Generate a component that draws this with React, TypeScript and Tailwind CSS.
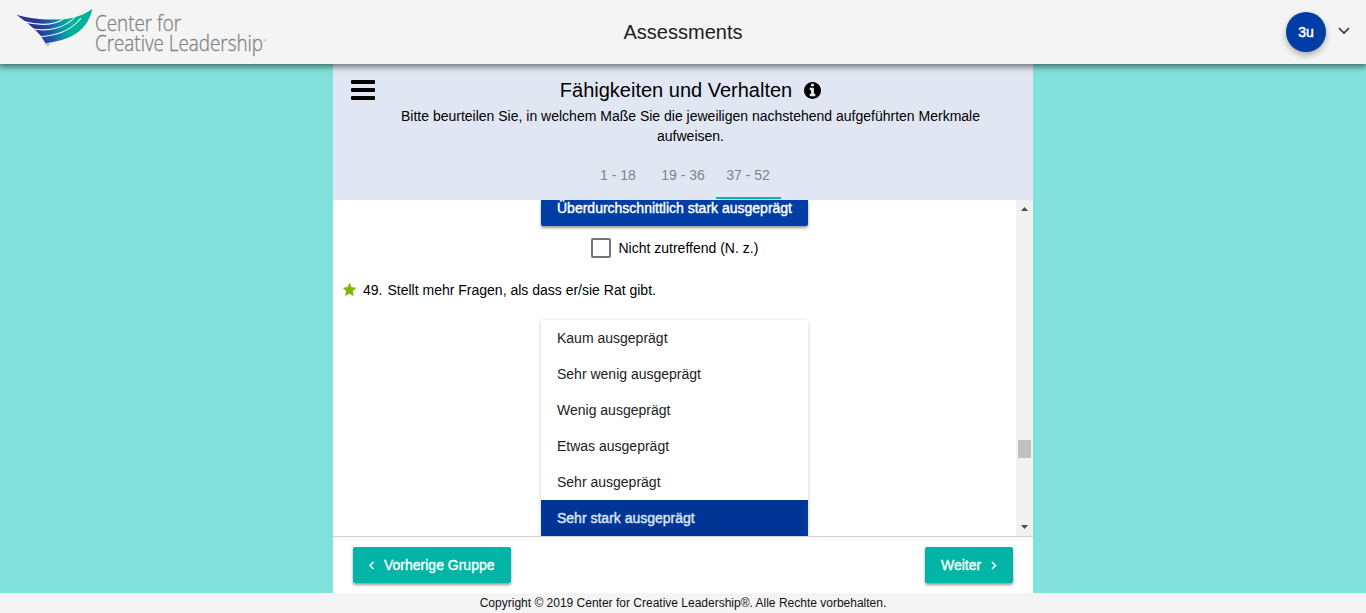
import React from "react";

const options = [
  "Kaum ausgeprägt",
  "Sehr wenig ausgeprägt",
  "Wenig ausgeprägt",
  "Etwas ausgeprägt",
  "Sehr ausgeprägt",
];

function Logo() {
  return (
    <svg width="290" height="64" viewBox="0 0 290 64" className="block">
      <defs>
        <linearGradient id="wing" gradientUnits="userSpaceOnUse" x1="36" y1="26" x2="70" y2="19">
          <stop offset="0" stopColor="#2b3490" />
          <stop offset="0.35" stopColor="#1d55a4" />
          <stop offset="0.7" stopColor="#0a93a8" />
          <stop offset="1" stopColor="#00b398" />
        </linearGradient>
      </defs>
      <path
        d="M16.500 14.800 C28 18.500 44 20.300 62 19.300 C74 18.500 84 15 92.300 8.700 C90 21 83 30 72 36 C63 40.500 54 42 45.500 43.300 C42.500 38 39 33 33.500 28.500 C28 23.500 22 19 16.500 14.800 Z"
        fill="url(#wing)"
      />
      <g fill="none" stroke="#f4f4f4" strokeWidth="1.100">
        <path d="M24 21.600 C40 26 54 25 64 18.700" />
        <path d="M32 28.800 C48 32 65 28 75 17" />
        <path d="M38.500 36.500 C56 36.500 72 30 81 18" />
      </g>
      <text x="45" y="45.800" fontSize="3" fill="#777" fontFamily="Liberation Sans, sans-serif">TM</text>
      <g
        fill="#7b8385"
        stroke="#7b8385"
        strokeWidth="0.300"
        fontFamily="Open Sans, sans-serif"
        fontWeight="300"
        fontSize="21.500"
      >
        <text x="95" y="31.200" textLength="86" lengthAdjust="spacingAndGlyphs">Center for</text>
        <text x="95" y="50.600" textLength="168" lengthAdjust="spacingAndGlyphs">Creative Leadership</text>
      </g>
      <text x="263.300" y="42" fontSize="4" fill="#7b8385" fontFamily="Liberation Sans, sans-serif">®</text>
    </svg>
  );
}

export default function App() {
  return (
    <div className="flex h-[613px] w-[1366px] flex-col overflow-hidden bg-[#82e2db] font-['Liberation_Sans',Arial,sans-serif] text-sm text-black">
      <header className="relative z-10 grid h-16 shrink-0 grid-cols-[1fr_auto_1fr] items-center bg-[#f4f4f4] shadow-[0_2px_6px_1px_rgba(0,0,0,0.5)]">
        <Logo />
        <h1 className="text-xl leading-6 font-normal text-[#212121]">Assessments</h1>
        <div className="flex items-center justify-end gap-3 pr-4">
          <div className="flex size-10 items-center justify-center rounded-full bg-[#003da5] text-sm text-white shadow-[0_3px_6px_rgba(0,0,0,0.3)] [-webkit-text-stroke:0.500px_white]">
            3u
          </div>
          <svg width="12" height="8" viewBox="0 0 12 8" fill="none" stroke="#333" strokeWidth="1.600" className="-mt-0.5">
            <path d="M1 1 L6 6 L11 1" />
          </svg>
        </div>
      </header>

      <main className="mx-auto flex w-[700px] flex-1 flex-col overflow-hidden bg-white">
        <section className="flex h-[136px] shrink-0 bg-[#e0e7f3]">
          <button className="mt-4 ml-[18px] flex h-5 w-6 shrink-0 flex-col justify-between">
            <span className="h-1 w-6 rounded-[1px] bg-black" />
            <span className="h-1 w-6 rounded-[1px] bg-black" />
            <span className="h-1 w-6 rounded-[1px] bg-black" />
          </button>
          <div className="ml-[15px] flex w-[600px] flex-col items-center pt-[14px]">
            <div className="flex items-center gap-3 pl-px">
              <h2 className="text-xl leading-6 font-normal">Fähigkeiten und Verhalten</h2>
              <svg width="17" height="17" viewBox="0 128 1536 1536">
                <path d="M1024 1376v-160q0-14-9-23t-23-9h-96v-512q0-14-9-23t-23-9h-320q-14 0-23 9t-9 23v160q0 14 9 23t23 9h96v320h-96q-14 0-23 9t-9 23v160q0 14 9 23t23 9h448q14 0 23-9t9-23zm-128-896v-160q0-14-9-23t-23-9h-192q-14 0-23 9t-9 23v160q0 14 9 23t23 9h192q14 0 23-9t9-23zm640 416q0 209-103 385.500t-279.500 279.500-385.500 103-385.500-103-279.500-279.500-103-385.500 103-385.500 279.500-279.500 385.500-103 385.500 103 279.500 279.500 103 385.500z" />
              </svg>
            </div>
            <p className="mt-1 w-[600px] pl-px text-center leading-5">
              Bitte beurteilen Sie, in welchem Maße Sie die jeweiligen nachstehend aufgeführten Merkmale
              <br />
              aufweisen.
            </p>
            <nav className="mt-1 mr-[14px] flex h-[49px] text-[#7d838c]">
              <a className="flex w-[65px] items-center justify-center">1 - 18</a>
              <a className="flex w-[65px] items-center justify-center">19 - 36</a>
              <a className="flex w-[65px] items-center justify-center border-b-2 border-[#00b5a5] pt-0.5">37 - 52</a>
            </nav>
          </div>
        </section>

        <section className="flex h-[336px] shrink-0">
          <div className="flex flex-1 flex-col overflow-hidden">
            <div className="ml-[208px] flex h-[26px] w-[267px] shrink-0 rounded-b-[2px] bg-[#003da5] pl-4 leading-[16px] text-white shadow-[0_2px_3px_rgba(0,0,0,0.4)] [-webkit-text-stroke:0.400px_white]">
              Überdurchschnittlich stark ausgeprägt
            </div>
            <label className="mt-3 ml-[258px] flex h-5 shrink-0 items-center gap-[7.500px]">
              <span className="size-5 rounded-[2px] border-2 border-[#757575]" />
              Nicht zutreffend (N. z.)
            </label>
            <div className="mt-[22px] ml-[10px] flex h-5 shrink-0 items-center">
              <svg
                width="13"
                height="13"
                viewBox="0 0 13 13"
                fill="#7ab800"
                stroke="#7ab800"
                strokeWidth="0.600"
                strokeLinejoin="round"
                className="-mt-px"
              >
                <path d="M6.500 0.400 L8.400 4.400 L12.700 5 L9.600 8.100 L10.400 12.500 L6.500 10.400 L2.600 12.500 L3.400 8.100 L0.300 5 L4.600 4.400 Z" />
              </svg>
              <span className="ml-[7px]">49.</span>
              <span className="ml-[5px]">Stellt mehr Fragen, als dass er/sie Rat gibt.</span>
            </div>
            <div className="mt-5 ml-[208px] w-[267px] shrink-0 rounded-t-[2px] bg-white text-[#212121] shadow-[0_1px_4px_rgba(0,0,0,0.2)]">
              {options.map((label) => (
                <div key={label} className="flex h-9 items-center pl-4">{label}</div>
              ))}
              <div className="flex h-9 items-center bg-[linear-gradient(90deg,#003a9f_0,#003595_2px,#003595_262px,#003a9f_264px)] pl-4 text-[#dfe5f1] [-webkit-text-stroke:0.400px_#dfe5f1]">
                Sehr stark ausgeprägt
              </div>
            </div>
          </div>
          <div className="flex w-[17px] flex-col items-center justify-between bg-[#f1f1f1] py-[7px]">
            <svg width="7" height="4" viewBox="0 0 7 4"><path d="M0 4 L3.500 0 L7 4 Z" fill="#505050" /></svg>
            <div className="mt-[161px] h-[18px] w-[13px] bg-[#c1c1c1]" />
            <svg width="7" height="4" viewBox="0 0 7 4"><path d="M0 0 L3.500 4 L7 0 Z" fill="#505050" /></svg>
          </div>
        </section>

        <div className="flex flex-1 items-start justify-between border-t border-[#cfcfcf] px-5 pt-[10px]">
          <button className="flex h-9 w-[158px] items-center rounded-[2px] bg-[#00b5a5] pl-4 text-white shadow-[0_2px_3px_rgba(0,0,0,0.4)] [-webkit-text-stroke:0.350px_white]">
            <svg width="6" height="9" viewBox="0 0 6 9" fill="none" stroke="white" strokeWidth="1.600"><path d="M4.500 1 L1 4.500 L4.500 8" /></svg>
            <span className="ml-[9px]">Vorherige Gruppe</span>
          </button>
          <button className="flex h-9 w-[88px] items-center rounded-[2px] bg-[#00b5a5] pl-4 text-white shadow-[0_2px_3px_rgba(0,0,0,0.4)] [-webkit-text-stroke:0.350px_white]">
            <span>Weiter</span>
            <svg width="6" height="9" viewBox="0 0 6 9" fill="none" stroke="white" strokeWidth="1.600" className="ml-[10px]"><path d="M1 1 L4.500 4.500 L1 8" /></svg>
          </button>
        </div>
      </main>

      <footer className="h-5 shrink-0 bg-[#f4f4f4] text-center text-xs leading-5 text-[#111]">
        Copyright © 2019 Center for Creative Leadership®. Alle Rechte vorbehalten.
      </footer>
    </div>
  );
}
